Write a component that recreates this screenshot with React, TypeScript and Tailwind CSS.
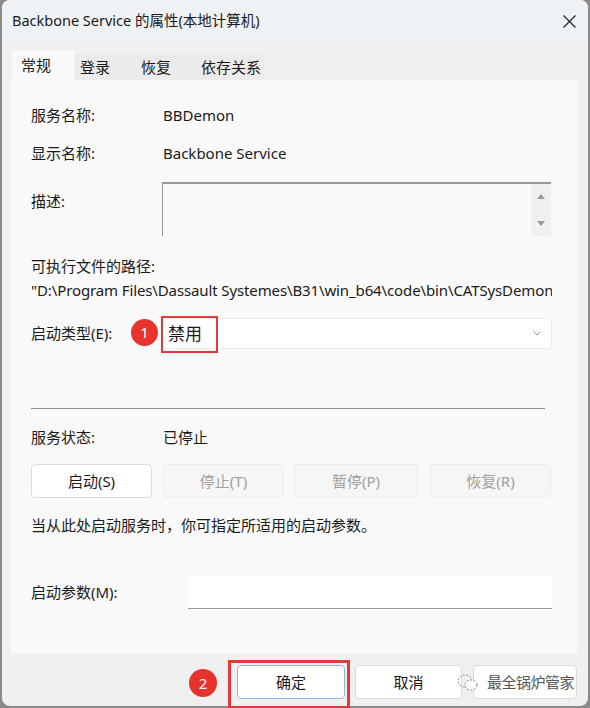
import React from "react";

const font = { fontFamily: '"Noto Sans", "Noto Sans CJK SC", sans-serif' };

function Btn({ children, disabled, className = "" }: { children: React.ReactNode; disabled?: boolean; className?: string }) {
  return (
    <div
      className={
        "flex items-center justify-center rounded-[4px] border h-[34px] text-[15px] " +
        (disabled ? "border-[#ececec] bg-[#f6f6f6] text-[#a0a0a0] " : "border-[#dcdcdc] bg-white text-[#1a1a1a] ") +
        className
      }
    >
      {children}
    </div>
  );
}

export default function App() {
  return (
    <div className="w-[590px] h-[708px] bg-[#8a8a8a] overflow-hidden" style={font}>
      <div className="ml-[2px] w-[586px] h-[706px] bg-[#f0f0f0] rounded-[8px] flex flex-col text-[#1a1a1a]">
        {/* title bar */}
        <div className="h-[42px] flex items-center justify-between pl-[10px] pr-[12px] bg-[#eff2f5] rounded-t-[8px]">
          <span className="text-[14.5px]">Backbone Service 的属性(本地计算机)</span>
          <svg width="13" height="13" viewBox="0 0 13 13">
            <path d="M0.5 0.5 L12.5 12.5 M12.5 0.5 L0.5 12.5" stroke="#222" strokeWidth="1.2" />
          </svg>
        </div>
        {/* tabs */}
        <div className="mt-[8px] pl-[10px] flex items-end h-[30px] text-[15px]">
          <div className="h-[30px] w-[63px] bg-[#f9f9f9] flex items-center pl-[9px]">常规</div>
          <div className="h-[26px] w-[190px] flex items-center bg-[#ebebeb]">
            <span className="pl-[5px] w-[66px]">登录</span>
            <span className="w-[60px]">恢复</span>
            <span>依存关系</span>
          </div>
        </div>
        {/* panel */}
        <div className="ml-[9px] w-[567px] h-[574px] bg-[#f9f9f9] pl-[20px] pr-[26px] text-[15px] relative">
          <div className="flex items-center h-[22px] mt-[24px]">
            <span className="w-[132px]">服务名称:</span>
            <span>BBDemon</span>
          </div>
          <div className="flex items-center h-[22px] mt-[16px]">
            <span className="w-[132px]">显示名称:</span>
            <span>Backbone Service</span>
          </div>
          <div className="flex mt-[18px]">
            <span className="w-[131px] mt-[8px]">描述:</span>
            <div className="w-[389px] h-[54px] border-t-[2px] border-l border-[#9a9a9a] bg-[#fafafa] flex justify-end">
              <div className="w-[20px] bg-[#f0f0f0] flex flex-col items-center justify-between py-[10px]">
                <svg width="8" height="5" viewBox="0 0 8 5"><path d="M0 5 L4 0 L8 5Z" fill="#9a9a9a" /></svg>
                <svg width="8" height="5" viewBox="0 0 8 5"><path d="M0 0 L4 5 L8 0Z" fill="#9a9a9a" /></svg>
              </div>
            </div>
          </div>
          <div className="mt-[19px] h-[22px] flex items-center">可执行文件的路径:</div>
          <div className="mt-[2px] h-[22px] flex items-center whitespace-nowrap overflow-hidden tracking-[-0.12px]">"D:\Program Files\Dassault Systemes\B31\win_b64\code\bin\CATSysDemon</div>
          <div className="flex items-center mt-[17px]">
            <span className="w-[131px]">启动类型(E):</span>
            <div className="w-[390px] h-[31px] bg-white border border-[#ececec] rounded-[3px] flex items-center justify-between pl-[5px] pr-[10px]">
              <span className="text-[17px]">禁用</span>
              <svg width="8" height="5" viewBox="0 0 8 5"><path d="M0.5 0.5 L4 4 L7.5 0.5" stroke="#999" fill="none" strokeWidth="1" /></svg>
            </div>
          </div>
          {/* annotations */}
          <div className="absolute left-[120px] top-[239px] w-[27px] h-[27px] rounded-full bg-[#e8322e] text-white text-[15px] flex items-center justify-center">1</div>
          <div className="absolute left-[150px] top-[236px] w-[57px] h-[37px] border-[2px] border-[#e23a3a]"></div>

          <div className="mt-[59px] w-[514px] h-px bg-[#8e8e8e]"></div>
          <div className="flex items-center h-[22px] mt-[17px]">
            <span className="w-[132px]">服务状态:</span>
            <span>已停止</span>
          </div>
          <div className="flex mt-[16px]">
            <Btn className="w-[121px]">启动(S)</Btn>
            <Btn disabled className="w-[121px] ml-[11px]">停止(T)</Btn>
            <Btn disabled className="w-[124px] ml-[10px]">暂停(P)</Btn>
            <Btn disabled className="w-[121px] ml-[12px]">恢复(R)</Btn>
          </div>
          <div className="mt-[16px] h-[22px] flex items-center">当从此处启动服务时，你可指定所适用的启动参数。</div>
          <div className="flex items-center mt-[40px]">
            <span className="w-[157px]">启动参数(M):</span>
            <div className="w-[364px] h-[33px] bg-white border-b border-[#9a9a9a]"></div>
          </div>
        </div>
        {/* bottom buttons */}
        <div className="flex items-center mt-[10px] relative h-[36px]">
          <div className="absolute left-[187px] top-[5px] w-[28px] h-[28px] rounded-full bg-[#e8322e] text-white text-[15px] flex items-center justify-center">2</div>
          <div className="absolute left-[226px] top-[-4px] w-[122px] h-[49px] border-[3px] border-[#e23a3a]"></div>
          <Btn className="w-[108px] ml-[235px] !border-[#8fb6e0] !border-[1.5px]">确定</Btn>
          <Btn className="w-[107px] ml-[10px]">取消</Btn>
          <div className="relative w-[104px] ml-[11px] h-[34px] rounded-[4px] border border-[#dcdcdc] bg-white flex items-center">
            <svg width="22" height="18" viewBox="0 0 22 18" className="absolute left-[-17px] top-[8px]">
              <ellipse cx="8" cy="7" rx="7" ry="6" fill="none" stroke="#888" strokeWidth="1" strokeDasharray="2 1.5" />
              <ellipse cx="14" cy="11" rx="6" ry="5" fill="white" stroke="#888" strokeWidth="1" strokeDasharray="2 1.5" />
            </svg>
            <span className="ml-[13px] text-[15px] text-[#555] tracking-[-0.5px]" style={{ textShadow: "0 0 1px #fff, 0 0 2px #fff" }}>最全锅炉管家</span>
          </div>
        </div>
      </div>
    </div>
  );
}
